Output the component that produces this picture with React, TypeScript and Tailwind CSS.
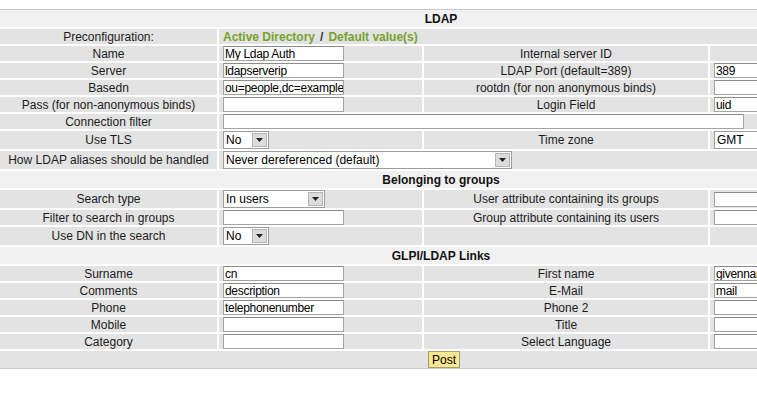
import React from 'react';

// GLPI style LDAP directory form

type Kids = { children?: React.ReactNode };

const CELL = 'bg-[#e3e3e3] text-[12px] text-[#1c1c1c] flex items-center';

function HeadRow({ children }: Kids) {
  return (
    <div className="col-span-4 h-[17px] bg-[#f1f1f1] flex items-center justify-center text-[12px] font-bold text-[#111]">
      {children}
    </div>
  );
}

function Label({ children, h = 'h-[15px]' }: Kids & { h?: string }) {
  return <div className={`${CELL} ${h} justify-center whitespace-nowrap`}>{children}</div>;
}

function Field({ children, h = 'h-[15px]', span = '' }: Kids & { h?: string; span?: string }) {
  return <div className={`${CELL} ${h} ${span} pl-[4px] overflow-hidden`}>{children}</div>;
}

function TextInput({ value = '', w = 'w-[121px]' }: { value?: string; w?: string }) {
  return (
    <div
      className={`${w} h-[15px] shrink-0 bg-white border border-[#a3a3a3] border-t-[#8c8c8c] flex items-center pl-[1px] text-[12px] tracking-[-0.3px] leading-none text-black overflow-hidden whitespace-nowrap`}
    >
      {value}
    </div>
  );
}

function DropDown({ value, w }: { value: string; w: string }) {
  return (
    <div
      className={`${w} h-[18px] shrink-0 bg-white border border-[#9c9c9c] flex items-center justify-between pl-[2px] pr-[1px] text-[12px] leading-none text-black`}
    >
      <span className="whitespace-nowrap">{value}</span>
      <span className="w-[15px] h-[14px] bg-[#dcdcdc] border border-[#b5b5b5] flex items-center justify-center">
        <svg width="7" height="4" viewBox="0 0 7 4">
          <path d="M0 0h7L3.5 4z" fill="#222" />
        </svg>
      </span>
    </div>
  );
}

export default function App() {
  return (
    <div className="w-[757px] h-[397px] overflow-hidden bg-white font-['Liberation_Sans',Arial,sans-serif]">
      <div className="mt-[9px] w-[882px] border-y border-[#c9c9c9] bg-white grid grid-cols-[217px_203px_284px_172px] gap-[2px]">
        <HeadRow>LDAP</HeadRow>

        <Label>Preconfiguration:</Label>
        <Field span="col-span-3">
          <span className="font-bold text-[#77a22b]">Active Directory</span>
          <span className="font-bold text-[#333] mx-[5px]">/</span>
          <span className="font-bold text-[#77a22b]">Default value(s)</span>
        </Field>

        <Label>Name</Label>
        <Field><TextInput value="My Ldap Auth" /></Field>
        <Label>Internal server ID</Label>
        <Field />

        <Label>Server</Label>
        <Field><TextInput value="ldapserverip" /></Field>
        <Label>LDAP Port (default=389)</Label>
        <Field><TextInput value="389" /></Field>

        <Label>Basedn</Label>
        <Field><TextInput value="ou=people,dc=example,dc=com" /></Field>
        <Label>rootdn (for non anonymous binds)</Label>
        <Field><TextInput /></Field>

        <Label>Pass (for non-anonymous binds)</Label>
        <Field><TextInput /></Field>
        <Label>Login Field</Label>
        <Field><TextInput value="uid" /></Field>

        <Label>Connection filter</Label>
        <Field span="col-span-3"><TextInput w="w-[521px]" /></Field>

        <Label h="h-[18px]">Use TLS</Label>
        <Field h="h-[18px]"><DropDown value="No" w="w-[46px]" /></Field>
        <Label h="h-[18px]">Time zone</Label>
        <Field h="h-[18px]"><DropDown value="GMT" w="w-[80px]" /></Field>

        <Label h="h-[18px]">How LDAP aliases should be handled</Label>
        <Field h="h-[18px]" span="col-span-3">
          <DropDown value="Never dereferenced (default)" w="w-[289px]" />
        </Field>

        <HeadRow>Belonging to groups</HeadRow>

        <Label h="h-[18px]">Search type</Label>
        <Field h="h-[18px]"><DropDown value="In users" w="w-[102px]" /></Field>
        <Label h="h-[18px]">User attribute containing its groups</Label>
        <Field h="h-[18px]"><TextInput /></Field>

        <Label>Filter to search in groups</Label>
        <Field><TextInput /></Field>
        <Label>Group attribute containing its users</Label>
        <Field><TextInput /></Field>

        <Label h="h-[18px]">Use DN in the search</Label>
        <Field h="h-[18px]"><DropDown value="No" w="w-[46px]" /></Field>
        <Label h="h-[18px]" />
        <Field h="h-[18px]" />

        <HeadRow>GLPI/LDAP Links</HeadRow>

        <Label>Surname</Label>
        <Field><TextInput value="cn" /></Field>
        <Label>First name</Label>
        <Field><TextInput value="givenname" /></Field>

        <Label>Comments</Label>
        <Field><TextInput value="description" /></Field>
        <Label>E-Mail</Label>
        <Field><TextInput value="mail" /></Field>

        <Label>Phone</Label>
        <Field><TextInput value="telephonenumber" /></Field>
        <Label>Phone 2</Label>
        <Field><TextInput /></Field>

        <Label>Mobile</Label>
        <Field><TextInput /></Field>
        <Label>Title</Label>
        <Field><TextInput /></Field>

        <Label>Category</Label>
        <Field><TextInput /></Field>
        <Label>Select Language</Label>
        <Field><TextInput /></Field>

        <div className="col-span-4 h-[17px] bg-[#e3e3e3] flex items-center justify-center">
          <button className="ml-[6px] h-[17px] px-[3px] bg-[#f8e690] border border-[#a99d6e] text-[12px] leading-none text-black">
            Post
          </button>
        </div>
      </div>
    </div>
  );
}
